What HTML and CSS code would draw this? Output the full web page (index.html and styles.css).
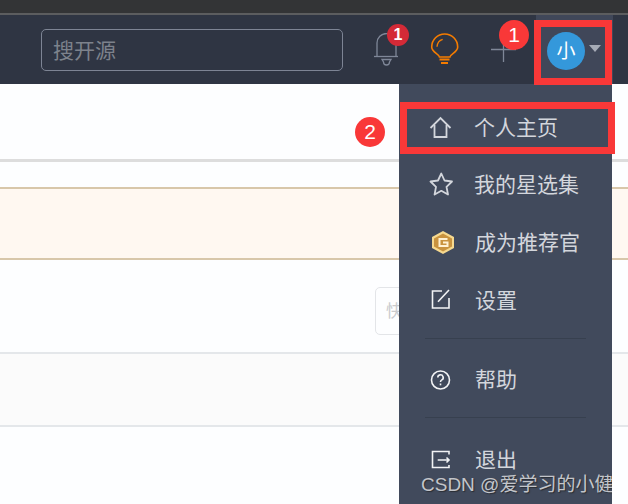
FILE: index.html
```html
<!DOCTYPE html>
<html lang="zh">
<head>
<meta charset="utf-8">
<title>Gitee</title>
<link rel="stylesheet" href="styles.css">
</head>
<body>
<div class="page">
  <div class="strip"></div>
  <header class="header">
    <div class="search">搜开源</div>
    <div class="hicon">
      <svg width="30" height="34" viewBox="0 0 30 34" fill="none" stroke="#7f8798" stroke-width="1.3"><path d="M6 23V10a9.500 9.500 0 0 1 19 0v13"/><path d="M3 23.500h24"/><path d="M11 26.500h9l-1.500 2.500a3 3 0 0 1-6 0z"/></svg>
    </div>
    <div class="hicon">
      <svg width="30" height="34" viewBox="0 0 30 34" fill="none" stroke="#f57c00" stroke-width="1.6"><path d="M10.500 24c0-3-7.800-4.500-7.800-10a13 13 0 1 1 26 0c0 5.500-7.800 7-7.800 10z"/><path d="M8 13.700c.3-3.500 2.500-6.500 5.700-7.400" stroke-width="1.400"/><path d="M10.500 26.500h10M12 30h7" stroke-width="1.800"/></svg>
    </div>
    <div class="hicon">
      <svg width="30" height="34" viewBox="0 0 30 34" fill="none" stroke="#7f8798" stroke-width="1.300"><path d="M4 16.500h25M16.500 4v25"/></svg>
    </div>
    <div class="user">
      <span class="avatar">小</span>
      <span class="caret"></span>
    </div>
  </header>
  <main>
    <div class="rule"></div>
    <div class="notice"></div>
    <div class="quick"><div class="quick-input">快</div></div>
    <div class="row"></div>
  </main>

  <span class="bell-badge">1</span>
  <nav class="menu">
    <a class="item item-first item-tight"><svg class="ic" width="24" height="24" viewBox="0 0 24 24" fill="none" stroke="#d3d6dc" stroke-width="1.800"><path d="M1.500 13 11.500 3l10 10"/><path d="M5.500 10v12h12V10"/></svg><span>个人主页</span></a>
    <a class="item item-tight"><svg class="ic" width="24" height="24" viewBox="0 0 24 24" fill="none" stroke="#d3d6dc" stroke-width="1.800"><path d="m12.300 1.500 3.200 7 7.500 1-5.500 5.300 1.500 7.700-6.700-3.700-6.700 3.700L7 14.800 1.500 9.500l7.500-1z" stroke-linejoin="round"/></svg><span>我的星选集</span></a>
    <a class="item"><svg class="ic ic-over" width="24" height="24" viewBox="0 0 24 24"><path d="m14 1 11 6v11l-11 6-11-6V7z" fill="#f6d98f"/><path d="m14 3.500 9 5v8l-9 5-9-5v-8z" fill="#c9933f"/><path d="M18.500 9H10.500v7h8v-3.500H14" fill="none" stroke="#fff1d2" stroke-width="2"/></svg><span>成为推荐官</span></a>
    <a class="item"><svg class="ic" width="24" height="24" viewBox="0 0 24 24" fill="none" stroke="#f2f3f5" stroke-width="1.600"><path d="M13 3H3.500v17H20V10"/><path d="M9 13.700 20 2"/></svg><span>设置</span></a>
    <div class="divider"></div>
    <a class="item"><svg class="ic" width="24" height="24" viewBox="0 0 24 24" fill="none" stroke="#f2f3f5" stroke-width="1.600"><circle cx="11.500" cy="13" r="9"/><path d="M8.800 10.500a2.700 2.700 0 1 1 4 2.400c-.9.500-1.300 1-1.300 2.100"/><path d="M11.500 16.500v1.800"/></svg><span>帮助</span></a>
    <div class="divider second"></div>
    <a class="item"><svg class="ic" width="24" height="24" viewBox="0 0 24 24" fill="none" stroke="#f2f3f5" stroke-width="1.600"><path d="M20 7.500V4.500H3.500V20.500H20V18"/><path d="M8.700 13H20M17.500 10.500 20 13l-2.500 2.500"/></svg><span>退出</span></a>
    <div class="watermark">CSDN @爱学习的小健</div>
  </nav>

  <div class="mark mark-user"></div>
  <div class="mark mark-home"></div>
  <span class="num num-1">1</span>
  <span class="num num-2">2</span>
</div>
</body>
</html>
```
FILE: styles.css
```css
* { box-sizing: border-box; }
html, body { margin: 0; padding: 0; background: #fff; }
body { font-family: "Noto Sans CJK SC", "Noto Sans", sans-serif; }
.page { position: relative; width: 628px; height: 504px; overflow: hidden; background: #fdfeff; }

.strip { height: 15px; background: #333436; border-bottom: 2px solid #5c5d5f; }
.header { height: 69px; padding-top: 1px; background: #2f3543; display: flex; align-items: center; }
.search {
  width: 302px; height: 42px; margin-left: 41px; padding-left: 11px;
  border: 1px solid #7d8494; border-radius: 5px;
  color: #7d828c; font-size: 21px; line-height: 38px;
}
.hicon { width: 30px; height: 34px; margin-left: 28px; }
.hicon:first-of-type { margin-left: 27px; }
.hicon svg { display: block; }
.user {
  width: 77px; height: 69px; margin: -1px 0 0 19px; padding-left: 11px; align-self: flex-start;
  background: #404759; display: flex; align-items: center; gap: 4px;
}
.avatar {
  width: 38px; height: 38px; border-radius: 50%; background: #3498db; color: #fff;
  font-size: 19px; line-height: 36px; text-align: center; margin-top: 3px;
}
.caret { width: 0; height: 0; border: 6px solid transparent; border-top: 7px solid #a6abb6; border-bottom: 0; margin-top: -3px; }

.rule { height: 3px; margin-top: 75px; background: #dddddd; }
.notice { height: 73px; margin-top: 25px; background: #fff8f1; border-top: 2px solid #d8c7aa; border-bottom: 2px solid #d8c7aa; }
.quick { margin-top: 27px; padding-left: 375px; }
.quick-input { width: 120px; height: 48px; padding-left: 10px; border: 1px solid #e3e5e8; border-radius: 5px; color: #c9cbce; font-size: 17px; line-height: 44px; }
.row { height: 75px; margin-top: 17px; background: #fbfbfb; border-top: 2px solid #e4e7ea; border-bottom: 2px solid #e4e7ea; }

.bell-badge {
  position: absolute; left: 387px; top: 24px; width: 22px; height: 22px; border-radius: 50%;
  background: #d42a37; color: #fff; font: bold 16px/22px "Liberation Sans", sans-serif; text-align: center;
}

.menu {
  position: absolute; left: 399px; top: 84px; width: 213px; height: 420px; overflow: hidden;
  background: #414a5c; padding-top: 15px; display: flex; flex-direction: column; color: #d3d6dc;
}
.item { flex: none; height: 58px; display: flex; align-items: center; padding-left: 30px; gap: 22px; font-size: 21px; }
.item span { margin-top: -2px; }
.item-first { height: 56px; }
.item-tight { gap: 21px; }
.ic { flex: none; }
.ic-over { overflow: visible; }
.divider { flex: none; height: 1px; margin: 9px 26px 11px; background: #37404f; }
.divider.second { margin: 9px 26px 12px; }
.watermark {
  position: absolute; left: 22px; top: 388px; width: 191px; white-space: nowrap; font-size: 19px; line-height: 26px;
  font-family: "Liberation Sans", "Noto Sans CJK SC", sans-serif;
  color: #c3c5ca; text-shadow: 1px 1px 1px #2a2d33;
}

.mark { position: absolute; border: 7px solid #f93838; }
.mark-user { left: 534px; top: 20px; width: 78px; height: 65px; }
.mark-home { left: 400px; top: 102px; width: 215px; height: 52px; }
.num {
  position: absolute; width: 30px; height: 30px; border-radius: 50%; background: #f93838; color: #fff;
  font: 21px/30px "Liberation Sans", sans-serif; text-align: center;
}
.num-1 { left: 499px; top: 20px; }
.num-2 { left: 355px; top: 117px; }
```
